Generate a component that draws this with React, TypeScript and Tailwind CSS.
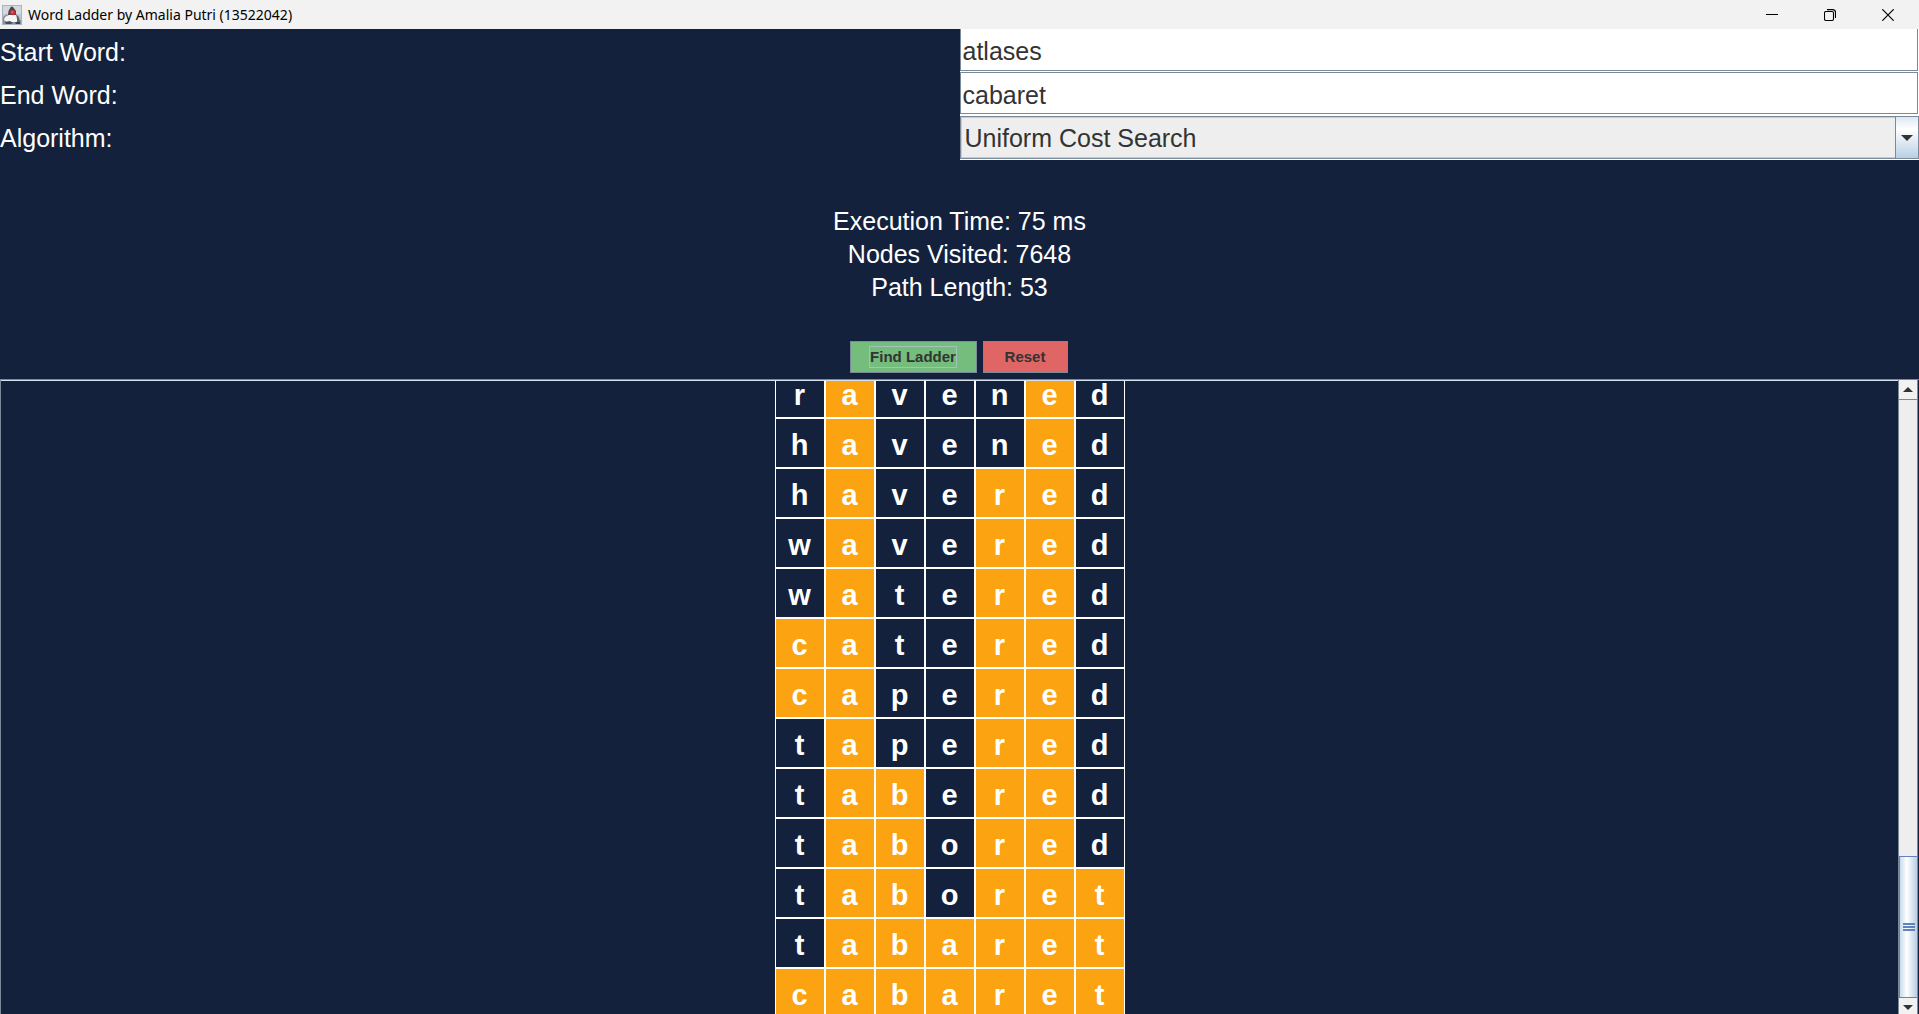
const TARGET = "cabaret";
const LADDER = [
  "ravened", "havened", "havered", "wavered", "watered", "catered", "capered",
  "tapered", "tabered", "tabored", "taboret", "tabaret", "cabaret",
];
const STATS = ["Execution Time: 75 ms", "Nodes Visited: 7648", "Path Length: 53"];

function AppIcon() {
  return (
    <svg className="h-5 w-5" viewBox="0 0 20 20" aria-hidden="true">
      <rect width="20" height="20" fill="#c3c7cd" />
      <path d="M0 0h20v9H0z" fill="#d5d9de" />
      <path d="M0 15h20v5H0z" fill="#8d939b" />
      <path d="M1 12l4-3 2 4-4 4H1z" fill="#8b9199" />
      <path d="M9 1.5L6.5 6 6 10l3 1 5-1V6l-3-4z" fill="#41454c" />
      <path d="M3 12l4-2 7 0 3 4-1 3H5l-3-2z" fill="#f4f5f6" />
      <path d="M14 9l3 3 1 5-3 1v-4z" fill="#62676f" />
      <path d="M3 17l5-1 3 2-2 1H4z" fill="#4a4f57" />
      <path d="M13 17h5v2h-4z" fill="#3b3f46" />
      <circle cx="10.7" cy="7.5" r="2.7" fill="#c8323a" />
      <circle cx="10.2" cy="6.9" r=".9" fill="#e4757a" />
      <rect x=".5" y=".5" width="19" height="19" fill="none" stroke="#a9b4c2" />
    </svg>
  );
}

function TitleBar() {
  const button = "flex w-[58px] items-center justify-center";
  return (
    <header className="flex h-[29px] shrink-0 justify-between bg-[#f2f2f2] text-black">
      <div className="flex items-center gap-1.5 pl-0.5">
        <AppIcon />
        <h1 className="font-['Noto_Sans',sans-serif] text-sm">Word Ladder by Amalia Putri (13522042)</h1>
      </div>
      <div className="flex pr-0.5">
        <button type="button" aria-label="Minimize" className={button}>
          <svg width="12" height="12" viewBox="0 0 12 12"><path d="M0 5.5h12" stroke="#000" /></svg>
        </button>
        <button type="button" aria-label="Restore" className={button}>
          <svg width="12" height="12" viewBox="0 0 12 12" fill="none" stroke="#000" strokeWidth="1.1">
            <rect x=".5" y="2.5" width="9" height="9" rx="1.5" />
            <path d="M3 .6h5.5a3 3 0 0 1 3 3V9" />
          </svg>
        </button>
        <button type="button" aria-label="Close" className={button}>
          <svg width="12" height="12" viewBox="0 0 12 12"><path d="M.3.3l11.4 11.4M11.7.3L.3 11.7" stroke="#000" strokeWidth="1.2" /></svg>
        </button>
      </div>
    </header>
  );
}

function SearchForm() {
  return (
    <form className="grid shrink-0 grid-cols-2 grid-rows-[43px_44px_44px] text-[25px]">
      <label htmlFor="start" className="flex items-center pt-1">Start Word:</label>
      <div className="bg-white pr-px pb-px">
        <input id="start" defaultValue="atlases" className="h-full w-full border border-t-0 border-[#7a8a99] bg-white px-0.5 pt-1 text-[#333] outline-none" />
      </div>
      <label htmlFor="end" className="flex items-center pt-1">End Word:</label>
      <div className="bg-white pr-px pb-0.5">
        <input id="end" defaultValue="cabaret" className="h-full w-full border border-[#7a8a99] bg-white px-0.5 pt-1 text-[#333] outline-none" />
      </div>
      <label htmlFor="algorithm" className="flex items-center pt-0.5">Algorithm:</label>
      <div className="relative bg-white pb-px">
        <select id="algorithm" className="h-full w-full appearance-none border border-[#7a8a99] bg-[#eee] px-1 pt-0.5 text-[#333] outline-none inset-ring inset-ring-[#b8cfe5]">
          <option>Uniform Cost Search</option>
          <option>Greedy Best First Search</option>
          <option>A* Search</option>
        </select>
        <span className="pointer-events-none absolute top-0 right-0 bottom-px flex w-6 items-center justify-center border border-[#7a8a99] bg-linear-to-b from-[#dde8f3] via-white via-30% to-[#b8cfe5]">
          <svg width="12" height="6" viewBox="0 0 12 6"><path d="M0 0h12L6 6z" fill="#333" /></svg>
        </span>
      </div>
    </form>
  );
}

function ScrollBar() {
  return (
    <div className="flex w-5 shrink-0 flex-col border-x border-[#7a8a99] bg-[#eee]">
      <button type="button" aria-label="Scroll up" className="flex h-5 shrink-0 items-center justify-center border-b border-[#7a8a99] bg-[#f2f2f2]">
        <svg width="10" height="5" viewBox="0 0 10 5"><path d="M0 5h10L5 0z" fill="#333" /></svg>
      </button>
      <div className="mt-auto flex h-[142px] shrink-0 flex-col items-center justify-center gap-px border-y border-l border-[#6382bf] bg-linear-to-r from-[#c8dbee] via-white via-40% to-[#b8cfe5]">
        <span className="h-0.5 w-3 bg-[#6382bf]" />
        <span className="h-0.5 w-3 bg-[#6382bf]" />
        <span className="h-0.5 w-3 bg-[#6382bf]" />
      </div>
      <button type="button" aria-label="Scroll down" className="flex h-4 shrink-0 items-end justify-center bg-[#f2f2f2] pb-1">
        <svg width="10" height="5" viewBox="0 0 10 5"><path d="M0 0h10L5 5z" fill="#333" /></svg>
      </button>
    </div>
  );
}

export default function App() {
  return (
    <div className="flex h-screen flex-col overflow-hidden bg-[#14213d] font-['Liberation_Sans',Arial,sans-serif] text-white">
      <TitleBar />
      <SearchForm />
      <section className="flex shrink-0 flex-col items-center pt-[45px] text-[25px] leading-[33px]">
        {STATS.map((line) => <p key={line}>{line}</p>)}
      </section>
      <div className="mt-[37px] mb-1.5 flex shrink-0 justify-center gap-1.5 pr-0.5 text-[15px] font-bold text-[#333]">
        <button type="button" className="flex h-8 w-[127px] items-center justify-center border border-[#7a8a99] bg-[#74bd7c]">
          <span className="border border-[#a3c1c0] leading-5">Find Ladder</span>
        </button>
        <button type="button" className="h-8 w-[85px] border border-[#7a8a99] bg-[#e06666]">Reset</button>
      </div>
      <main className="flex min-h-0 flex-1 border-t border-l border-[#7a8a99] pr-px">
        <div className="flex min-w-0 flex-1 justify-center overflow-hidden border-t border-[#d5e2ec]">
          <table className="-mt-[13px] block border-separate border-spacing-0 text-[29px] leading-8 font-bold">
            <tbody>
              {LADDER.map((word) => (
                <tr key={word}>
                  {word.split("").map((letter, i) => (
                    <td
                      key={i}
                      className={
                        letter === TARGET[i]
                          ? "h-[50px] w-[50px] min-w-[50px] border border-white bg-[#fca311] p-0 pt-1 text-center"
                          : "h-[50px] w-[50px] min-w-[50px] border border-white p-0 pt-1 text-center"
                      }
                    >
                      {letter}
                    </td>
                  ))}
                </tr>
              ))}
            </tbody>
          </table>
        </div>
        <ScrollBar />
      </main>
    </div>
  );
}
